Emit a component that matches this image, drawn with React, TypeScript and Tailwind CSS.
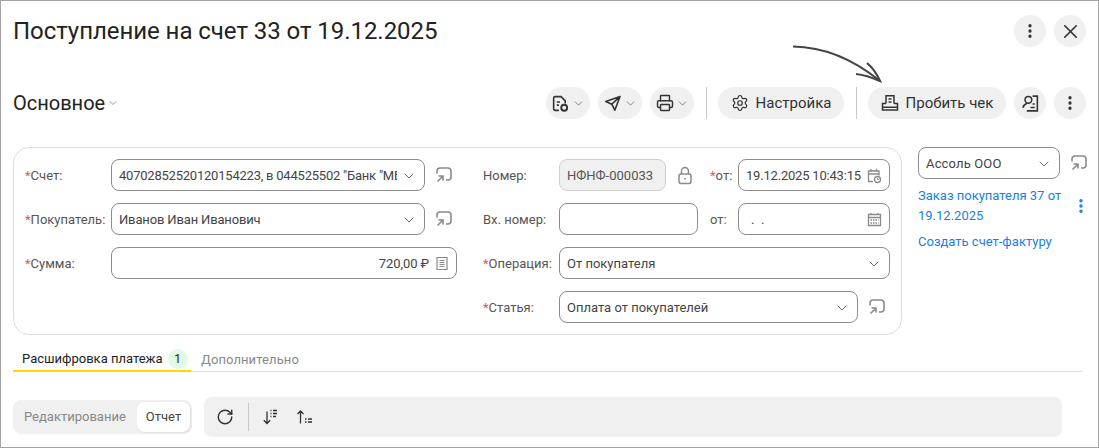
import React from "react";
import { ChevronDown, EllipsisVertical, X, Printer, Settings, RotateCw } from "lucide-react";

const ShareIcon = () => (
  <svg width="18" height="18" viewBox="0 0 18 18" fill="none" stroke="#8a8a8a" strokeWidth="1.6" className="shrink-0">
    <path d="M2 7.500V5a3 3 0 0 1 3-3h8a3 3 0 0 1 3 3v6a3 3 0 0 1-3 3h-2" />
    <path d="M2.500 15.500L8 10M3.500 10H8v4.500" />
  </svg>
);

const RoundButton = ({ children, className = "" }: { children: React.ReactNode; className?: string }) => (
  <button className={`flex h-8 items-center justify-center rounded-full bg-[#f0f0f0] text-[#333] ${className}`}>
    {children}
  </button>
);

const Chevron = ({ size = 16 }: { size?: number }) => <ChevronDown size={size} strokeWidth={1.4} color="#666" />;

const Label = ({ text, required, className = "" }: { text: string; required?: boolean; className?: string }) => (
  <span className={`shrink-0 pt-px text-[13px] text-[#555] ${className}`}>
    {required && <span className="text-[#f05050]">*</span>}
    {text}
  </span>
);

const Box = ({ children, className = "" }: { children?: React.ReactNode; className?: string }) => (
  <div className={`flex h-8 items-center rounded-lg border border-[#8c8c8c] px-[7px] pt-px text-[13px] text-[#444] ${className}`}>
    {children}
  </div>
);

export default function App() {
  return (
    <div className="relative h-[448px] w-[1099px] overflow-hidden border border-[#a3a3a3] bg-white font-['Roboto',sans-serif]">
      <div className="flex items-start justify-between pl-3 pr-3 pt-[14px]">
        <h1 className="text-2xl leading-8 tracking-[-0.05px] text-[#222]">Поступление на счет 33 от 19.12.2025</h1>
        <div className="flex gap-2">
          <RoundButton className="w-8"><EllipsisVertical size={18} strokeWidth={2.4} /></RoundButton>
          <RoundButton className="w-8"><X size={23} strokeWidth={1.7} /></RoundButton>
        </div>
      </div>

      <div className="mt-[40px] flex items-center pl-3 pr-3">
        <div className="flex items-center gap-[2px] text-xl text-[#222]">
          Основное
          <Chevron size={12} />
        </div>
        <div className="ml-auto flex items-center gap-2">
          <RoundButton className="w-11 gap-0.5">
            <svg width="19" height="19" viewBox="0 0 18 18" fill="none" stroke="#333" strokeWidth="1.5">
              <path d="M7.500 15.500H4A1.500 1.500 0 0 1 2.500 14V4A1.500 1.500 0 0 1 4 2.500h5.500L13.500 6.500v2.500" />
              <path d="M5.500 7.500h3M5.500 10.500h2" />
              <circle cx="12.500" cy="13" r="2.800" strokeWidth="1.800" />
            </svg>
            <Chevron size={13} />
          </RoundButton>
          <RoundButton className="w-11 gap-0.5">
            <svg width="18" height="18" viewBox="0 0 18 18" fill="none" stroke="#333" strokeWidth="1.600" strokeLinejoin="round">
              <path d="M16 2.500L1.800 7.500L7.800 10.200L10.800 16.200ZM16 2.500L7.800 10.200" />
            </svg>
            <Chevron size={13} />
          </RoundButton>
          <RoundButton className="w-11 gap-0.5">
            <Printer size={18} strokeWidth={1.9} />
            <Chevron size={13} />
          </RoundButton>
          <div className="ml-1 mr-[3px] h-8 w-px bg-[#c8c8c8]" />
          <RoundButton className="w-[126px] gap-[7px] text-[15px]">
            <Settings size={18} strokeWidth={1.6} />
            Настройка
          </RoundButton>
          <div className="ml-1 mr-[3px] h-8 w-px bg-[#c8c8c8]" />
          <RoundButton className="w-[138px] gap-[7px] text-[15px]">
            <svg width="18" height="18" viewBox="0 0 18 18" fill="none" stroke="#333" strokeWidth="1.500">
              <path d="M5 9.500V1.800h8v7.700M5 9.500H1.500V16h15V9.500H13M1.500 13.200h15M7.500 5h3M7.500 8h3" />
            </svg>
            Пробить чек
          </RoundButton>
          <RoundButton className="w-8">
            <svg width="19" height="19" viewBox="0 0 18 18" fill="none" stroke="#333" strokeWidth="1.500">
              <circle cx="7" cy="5.500" r="3.200" />
              <path d="M1.800 13c.5-2 2-3.500 3.700-4.300M11 2h4.500v14H5.500M9 12.800h4M11 9.500h2" />
            </svg>
          </RoundButton>
          <RoundButton className="w-8"><EllipsisVertical size={18} strokeWidth={2.4} /></RoundButton>
        </div>
      </div>

      <div className="ml-3 mt-[28px] flex items-start">
        <div className="flex h-[188px] w-[889px] shrink-0 rounded-2xl border border-[#dcdcdc] p-[11px]">
          <div className="flex w-[458px] shrink-0 flex-col gap-3">
            <div className="flex items-center">
              <Label text="Счет:" required className="w-[86px]" />
              <Box className="w-[314px] justify-between">
                <span className="w-[278px] overflow-hidden whitespace-nowrap tracking-[-0.22px]">40702852520120154223, в 044525502 "Банк "МБ</span>
                <Chevron />
              </Box>
              <span className="ml-[10px]"><ShareIcon /></span>
            </div>
            <div className="flex items-center">
              <Label text="Покупатель:" required className="w-[86px]" />
              <Box className="w-[314px] justify-between">
                <span className="tracking-[-0.15px]">Иванов Иван Иванович</span>
                <Chevron />
              </Box>
              <span className="ml-[10px]"><ShareIcon /></span>
            </div>
            <div className="flex items-center">
              <Label text="Сумма:" required className="w-[86px]" />
              <Box className="w-[346px] justify-end gap-1.5">
                <span className="tracking-[-0.1px]">720,00 ₽</span>
                <svg width="14" height="15" viewBox="0 0 14 15" fill="none" stroke="#8a8a8a" strokeWidth="1.200">
                  <path d="M2 1.500h10v12H2zM4.500 4.500h5M4.500 6.500h5M4.500 8.500h5M4.500 10.500h5" />
                </svg>
              </Box>
            </div>
          </div>

          <div className="flex flex-col gap-3">
            <div className="flex items-center">
              <Label text="Номер:" className="w-[76px]" />
              <Box className="w-[107px] border-[#cfcfcf] bg-[#f0f0f0] text-[#555]">НФНФ-000033</Box>
              <svg width="18" height="19" viewBox="0 0 18 19" fill="none" stroke="#8a8a8a" strokeWidth="1.500" className="ml-[10px]">
                <rect x="3" y="8" width="12" height="9.500" rx="2" />
                <path d="M5.500 8V5a3.500 3.500 0 0 1 7 0v3M9 12v1.500" />
              </svg>
              <Label text="от:" required className="ml-4 w-[28px]" />
              <Box className="w-[152px] justify-between">
                <span className="tracking-[-0.2px]">19.12.2025 10:43:15</span>
                <svg width="15" height="16" viewBox="0 0 15 16" fill="none" stroke="#8a8a8a" strokeWidth="1.300">
                  <path d="M6 13.500H1.500V3h10.500v4.500M1.500 6h10.500M4 1v2.500M9.500 1v2.500" />
                  <circle cx="10.500" cy="11.500" r="3" />
                  <path d="M10.500 10v1.500h1.300" strokeWidth="1" />
                </svg>
              </Box>
            </div>
            <div className="flex items-center">
              <Label text="Вх. номер:" className="w-[76px]" />
              <Box className="w-[139px]" />
              <Label text="от:" className="ml-[12px] w-[28px]" />
              <Box className="w-[152px] justify-between">
                <span className="whitespace-pre pl-[5px]">{".  ."}</span>
                <svg width="15" height="15" viewBox="0 0 15 15" fill="none" stroke="#8a8a8a" strokeWidth="1.300">
                  <path d="M1.500 2.500h12v11h-12zM1.500 5.500h12M4 1v2M11 1v2" />
                  <path d="M3.500 8h8M3.500 11h8" strokeDasharray="1.500 1" />
                </svg>
              </Box>
            </div>
            <div className="flex items-center">
              <Label text="Операция:" required className="w-[76px]" />
              <Box className="w-[331px] justify-between">
                От покупателя
                <Chevron />
              </Box>
            </div>
            <div className="flex items-center">
              <Label text="Статья:" required className="w-[76px]" />
              <Box className="w-[299px] justify-between">
                Оплата от покупателей
                <Chevron />
              </Box>
              <span className="ml-[10px]"><ShareIcon /></span>
            </div>
          </div>
        </div>

        <div className="ml-4 w-[175px]">
          <div className="flex items-center">
            <Box className="w-[142px] justify-between">
              <span className="tracking-[0.15px]">Ассоль ООО</span>
              <Chevron />
            </Box>
            <span className="ml-[10px]"><ShareIcon /></span>
          </div>
          <div className="mt-[7px] flex items-center">
            <a className="w-[146px] shrink-0 text-[13px] leading-5 text-[#1a7fe0]">Заказ покупателя 37 от 19.12.2025</a>
            <EllipsisVertical size={18} color="#1a7fe0" strokeWidth={2.6} className="ml-2 shrink-0" />
          </div>
          <a className="mt-[6px] block text-[13px] leading-5 text-[#1a7fe0]">Создать счет-фактуру</a>
        </div>
      </div>

      <div className="ml-3 mt-[13px] flex w-[1069px] items-end border-b border-[#dcdcdc]">
        <div className="-mb-px flex h-[24px] w-[178px] items-center border-b-2 border-[#ffd800] pl-[9px] text-[13px] text-[#222]">
          Расшифровка платежа
          <span className="ml-[5px] flex h-5 w-5 items-center justify-center rounded-full bg-[#e4f8e8] text-xs">1</span>
        </div>
        <div className="-mb-px flex h-[24px] items-center pl-[10px] text-[13px] tracking-[0.1px] text-[#888]">Дополнительно</div>
      </div>

      <div className="ml-3 mt-[25px] flex items-center gap-3">
        <div className="flex h-[34px] w-[179px] items-center justify-between rounded-lg bg-[#f0f0f0] px-[2px] text-[13px]">
          <span className="pl-[9px] text-[#888]">Редактирование</span>
          <span className="flex h-[30px] w-[53px] items-center justify-center rounded-lg bg-white text-[#444] shadow-[1px_1px_2px_rgba(0,0,0,0.08)]">Отчет</span>
        </div>
        <div className="flex h-10 w-[858px] items-center rounded-lg bg-[#f0f0f0] pl-3">
          <RotateCw size={18} color="#333" strokeWidth={1.9} />
          <div className="ml-[14px] h-7 w-px bg-[#c8c8c8]" />
          <svg width="18" height="18" viewBox="0 0 18 18" fill="none" stroke="#333" strokeWidth="1.300" className="ml-[13px]">
            <path d="M5 3.500v12M1.800 12.300L5 15.500l3.200-3.200M8.500 2.500h1M11 2.500h4M8.500 5.500h1M11 5.500h4M8.500 8.500h1M11 8.500h3" />
          </svg>
          <svg width="18" height="18" viewBox="0 0 18 18" fill="none" stroke="#333" strokeWidth="1.300" className="ml-4">
            <path d="M4.500 15.500V3M1.500 6L4.500 3l3 3M9 11h1.500M12 11h4M9 14h1.500M12 14h4" />
          </svg>
        </div>
      </div>

      <svg width="92" height="40" viewBox="0 0 92 40" fill="none" stroke="#444" strokeWidth="2.200" className="absolute left-[792px] top-[43px]">
        <path d="M0 2.500C30 3 60 15 87 37" />
        <path d="M63 30C72 31 80 34 87 37C84 30 80 24 74 19" />
      </svg>
    </div>
  );
}
